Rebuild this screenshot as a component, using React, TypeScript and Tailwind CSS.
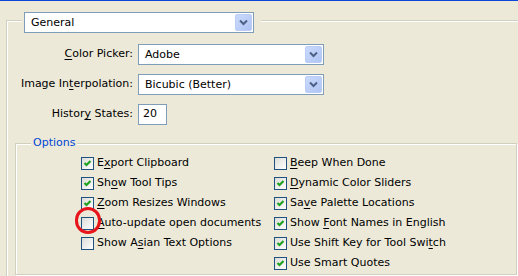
import React from "react";

const Mn = ({ text, at }: { text: string; at?: number }) =>
  at === undefined ? (
    <>{text}</>
  ) : (
    <>
      {text.slice(0, at)}
      <u className="underline-offset-[2px]">{text[at]}</u>
      {text.slice(at + 1)}
    </>
  );

const Combo = ({ value, className }: { value: string; className: string }) => (
  <div className={`h-[21px] border border-[#7F9DB9] bg-white flex items-center ${className}`}>
    <span className="flex-1 pl-[6px] leading-none">{value}</span>
    <span className="w-[17px] h-[17px] mr-px rounded-[2px] bg-linear-to-br from-[#CBDAFC] to-[#AFC4F4] border border-[#BACDF7] flex items-center justify-center">
      <svg width="9" height="7" viewBox="0 0 9 7">
        <path d="M1 1.5 L4.5 5 L8 1.5" stroke="#4D6185" strokeWidth="2" fill="none" />
      </svg>
    </span>
  </div>
);

const Box = ({ checked }: { checked: boolean }) => (
  <span className="w-[13px] h-[13px] shrink-0 border border-[#1C5180] bg-linear-to-br from-[#DCDCD7] to-white flex items-center justify-center">
    {checked && (
      <svg width="11" height="11" viewBox="0 0 11 11">
        <path d="M2.5 5 L4.5 7 L8.5 3" stroke="#21A121" strokeWidth="2.2" fill="none" />
      </svg>
    )}
  </span>
);

type Opt = { text: string; at?: number; checked: boolean; circled?: boolean };

const left: Opt[] = [
  { text: "Export Clipboard", at: 1, checked: true },
  { text: "Show Tool Tips", at: 2, checked: true },
  { text: "Zoom Resizes Windows", at: 0, checked: true },
  { text: "Auto-update open documents", at: 0, checked: false, circled: true },
  { text: "Show Asian Text Options", at: 6, checked: false },
];

const right: Opt[] = [
  { text: "Beep When Done", at: 0, checked: false },
  { text: "Dynamic Color Sliders", at: 0, checked: true },
  { text: "Save Palette Locations", at: 2, checked: true },
  { text: "Show Font Names in English", at: 5, checked: true },
  { text: "Use Shift Key for Tool Switch", at: 26, checked: true },
  { text: "Use Smart Quotes", checked: true },
];

const CheckRow = ({ opt }: { opt: Opt }) => (
  <div className="h-[20px] flex items-center gap-[3px]">
    <span className="relative">
      <Box checked={opt.checked} />
      {opt.circled && (
        <span className="absolute left-[-6px] top-[-10px] w-[26px] h-[27px] rounded-full border-[3px] border-[#E8141C]" />
      )}
    </span>
    <span className="whitespace-nowrap">
      <Mn text={opt.text} at={opt.at} />
    </span>
  </div>
);

export default function App() {
  return (
    <div className="w-[518px] h-[276px] overflow-hidden bg-[#ECE9D8] border-t border-[#0A46D8] text-black text-[11px] font-['DejaVu_Sans',sans-serif]">
      {/* outer group, the General combo acts as its caption */}
      <div className="ml-[6px] mt-[19px] h-[300px] border-l border-t border-[#D0D0BF] shadow-[inset_1px_1px_0_#fff]">
        <div className="-mt-[9px] ml-[15px] w-fit pl-[2px] pr-[7px] bg-[#ECE9D8]">
          <Combo value="General" className="w-[230px]" />
        </div>

        <div className="mt-[11px] grid grid-cols-[126px_auto] gap-x-[5px] gap-y-[9px] items-center">
          <span className="text-right">
            <Mn text="Color Picker:" at={0} />
          </span>
          <Combo value="Adobe" className="w-[186px]" />
          <span className="text-right">
            <Mn text="Image Interpolation:" at={8} />
          </span>
          <Combo value="Bicubic (Better)" className="w-[186px]" />
          <span className="text-right">
            <Mn text="History States:" at={6} />
          </span>
          <div className="w-[29px] h-[21px] border border-[#7F9DB9] bg-white flex items-center pl-[4px]">20</div>
        </div>

        {/* Options group */}
        <div className="mt-[18px] ml-[8px] w-[502px] h-[132px] border border-[#D0D0BF] shadow-[inset_1px_1px_0_#fff,1px_1px_0_#fff]">
          <span className="block w-fit -mt-[8px] ml-[15px] px-[2px] leading-[14px] bg-[#ECE9D8] text-[#0046D5]">
            Options
          </span>
          <div className="mt-[3px] pl-[65px] grid grid-cols-[193px_auto]">
            <div className="flex flex-col">
              {left.map((o) => (
                <CheckRow key={o.text} opt={o} />
              ))}
            </div>
            <div className="flex flex-col">
              {right.map((o) => (
                <CheckRow key={o.text} opt={o} />
              ))}
            </div>
          </div>
        </div>
      </div>
    </div>
  );
}
